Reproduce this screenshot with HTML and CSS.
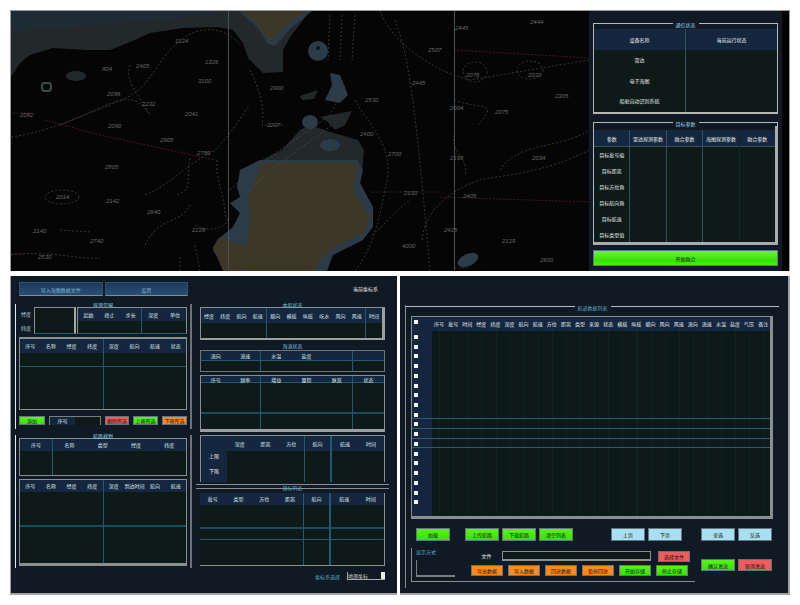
FILE: index.html
```html
<!DOCTYPE html>
<html lang="zh-CN">
<head>
  <meta charset="UTF-8" />
  <title>海图作业面板</title>
  <link rel="stylesheet" href="styles.css">
</head>
<body>
  <div class="top">
    <div class="map">
      <svg viewBox="11 11 578 260" width="578" height="260">
        <rect x="11" y="11" width="578" height="260" fill="#050505"/>
        <path class="mid" d="M11 11H310L290 37 283 50 283 72 263 73 248 58 243 43 233 30 217 27 183 28 150 33 130 42 110 50 87 50 53 48 30 55 20 63 11 77Z"/>
        <path class="deep" d="M11 11H228L200 16 130 22 60 28 11 32Z"/>
        <path class="shoal" d="M238 11H312L292 27 275 46 268 44 258 28 250 20Z"/>
        <path class="land" d="M242 11H308L287 23 270 42 263 32 255 20Z"/>
        <ellipse class="shoal" cx="318" cy="51" rx="10" ry="10"/>
        <circle cx="318" cy="48" r="2" fill="#10161c"/>
        <ellipse class="mid" cx="76" cy="76" rx="10" ry="5"/>
        <rect x="42" y="83" width="9" height="8" rx="3" fill="none" stroke="#3b5044" stroke-width="2"/>
        <path class="shoal" d="M330 73 340 75 348 95 340 103 325 100 332 85Z"/>
        <path class="mid" d="M300 96 318 90 314 99 302 100Z"/>
        <path class="mid" d="M320 117 352 111 345 125 335 130 328 122Z"/>
        <path class="mid" d="M250 170 262 160 282 150 300 130 310 125 330 132 358 140 364 150 362 172 340 172Z"/>
        <ellipse class="shoal" cx="310" cy="122" rx="8" ry="7"/>
        <ellipse class="shoal" cx="330" cy="145" rx="10" ry="6"/>
        <path class="shoal" d="M260 160 240 170 237 187 240 197 230 203 240 213 233 227 217 240 213 250 225 271H327L333 255 363 240 373 227 373 207 360 183 363 170 357 160Z"/>
        <path class="land" d="M260 163 353 163 358 170 353 190 370 217 363 233 333 248 320 260 315 271H223L213 247 220 237 247 247 250 217 248 197 257 177Z"/>
        <ellipse class="shoal" cx="468" cy="260" rx="11" ry="6" transform="rotate(-25 468 260)"/>
        <g class="contour">
          <path d="M11 137C60 130 90 110 120 100S150 70 175 45 230 30 240 45"/>
          <path d="M130 65C125 80 135 90 150 115"/>
          <path d="M60 125 110 105C130 95 140 100 150 115"/>
          <path d="M145 195C170 185 185 165 215 150 235 130 245 110 250 105"/>
          <path d="M190 158C185 180 195 190 175 195"/>
          <path d="M217 160C215 180 225 195 225 215 235 225 210 235 195 225"/>
          <ellipse cx="62" cy="197" rx="17" ry="7"/>
          <path d="M250 70C260 90 265 110 262 125L285 125"/>
          <path d="M230 190C260 160 290 145 330 115L345 85"/>
          <path d="M240 200C265 170 300 150 332 125"/>
          <path d="M330 15 328 60M342 15 340 60M355 15 352 60"/>
          <path d="M380 11C390 40 430 70 470 80L589 60"/>
          <path d="M355 100C365 120 390 140 388 175 380 215 375 245 355 271"/>
          <path d="M372 235C385 225 390 215 410 200"/>
          <ellipse cx="475" cy="72" rx="12" ry="10"/>
          <ellipse cx="530" cy="70" rx="13" ry="9"/>
          <path d="M454 100C480 110 500 100 478 125M454 135C450 150 470 160 465 175"/>
          <path d="M500 170C520 140 560 150 589 130"/>
          <path d="M422 240C425 210 450 190 480 180 500 175 540 175 589 150"/>
          <path d="M145 245C160 215 180 225 190 205M180 271V255M200 271 195 245"/>
          <path d="M11 255C50 250 80 260 100 258M60 230 90 232"/>
          <path d="M395 20C405 50 412 60 430 271"/>
        </g>
        <g class="redline">
          <path d="M45 120 100 135 160 148 215 160"/>
          <path d="M454 50 589 58M440 197 589 202M372 192H440"/>
          <path d="M13 113H32M13 254H24M228 268H241M455 268H468"/>
        </g>
        <g class="gridline">
          <path d="M228.500 11V271M454.500 11V271"/>
        </g>
        <g class="depth">
          <text x="175" y="43">1224</text><text x="205" y="64">1326</text><text x="198" y="83">3100</text>
          <text x="102" y="71">804</text><text x="136" y="68">2405</text><text x="142" y="106">2232</text>
          <text x="20" y="117">2082</text><text x="107" y="96">2096</text><text x="185" y="116">2041</text>
          <text x="108" y="128">2090</text><text x="160" y="142">2905</text><text x="197" y="155">2780</text>
          <text x="105" y="169">2805</text><text x="56" y="199">2014</text><text x="106" y="203">2142</text>
          <text x="192" y="232">2229</text><text x="90" y="243">2740</text><text x="33" y="233">2140</text>
          <text x="38" y="259">2530</text><text x="147" y="214">2640</text><text x="365" y="102">2530</text>
          <text x="360" y="136">2400</text><text x="388" y="156">2700</text><text x="455" y="30">2445</text>
          <text x="428" y="52">2507</text><text x="466" y="77">2076</text><text x="528" y="77">2033</text>
          <text x="412" y="85">2445</text><text x="450" y="110">2004</text><text x="495" y="114">2075</text>
          <text x="532" y="160">2034</text><text x="450" y="160">2195</text><text x="404" y="195">2133</text>
          <text x="463" y="198">2405</text><text x="444" y="232">2425</text><text x="502" y="243">2129</text>
          <text x="402" y="248">4000</text><text x="540" y="262">2600</text><text x="530" y="24">2444</text>
          <text x="555" y="98">2305</text><text x="270" y="90">2900</text><text x="267" y="127">2207</text>
        </g>
      </svg>
    </div>
    <div class="side">
      <div class="legend"><b>通信状态</b></div>
      <div class="box box-state">
        <div class="state-col">
          <div class="s-head">设备名称</div>
          <div class="s-row">雷达</div><div class="s-row">电子海图</div><div class="s-row">船舶自动识别系统</div>
        </div>
        <div class="state-col">
          <div class="s-head">当前运行状态</div>
          <div class="s-row"></div><div class="s-row"></div><div class="s-row"></div>
        </div>
      </div>
      <div class="legend legend-gap"><b>目标参数</b></div>
      <div class="box box-target">
        <div class="tg-grid">
          <div class="tg-col">
            <div class="s-head tg-head">参数</div>
            <div class="tg-row">目标批号编</div><div class="tg-row">目标距离</div><div class="tg-row">目标方位角</div>
            <div class="tg-row">目标航向角</div><div class="tg-row">目标航速</div><div class="tg-row">目标类型值</div>
          </div>
          <div class="tg-col"><div class="s-head tg-head">雷达探测参数</div></div>
          <div class="tg-col"><div class="s-head tg-head">融合参数</div></div>
          <div class="tg-col"><div class="s-head tg-head">海图探测参数</div></div>
          <div class="tg-col tg-last"><div class="s-head tg-head">融合参数</div></div>
        </div>
      </div>
      <button class="btn green go">开始融合</button>
    </div>
    <div class="strip"></div>
  </div>

  <div class="bottom">
    <div class="panel-left">
      <div class="col-a">
        <div class="tabs">
          <button class="tab">导入海图数据文件</button>
          <button class="tab">设置</button>
        </div>
        <div class="group">
          <div class="g-title">探测范围</div>
          <div class="pair">
            <div class="pair-label"><span>经度</span><span>纬度</span></div>
            <div class="tbl t-pick"><div class="blk"></div></div>
            <div class="tbl t-range">
              <div class="blk b-3"><div class="head h13"><span>起始</span><span>终止</span><span>步长</span></div></div>
              <div class="blk b-2"><div class="head h13"><span>深度</span><span>单位</span></div></div>
            </div>
          </div>
          <div class="tbl t-plan">
            <div class="blk"><div class="head h14"><span>序号</span><span>名称</span><span>经度</span><span>纬度</span></div><div class="rule r14"></div></div>
            <div class="blk"><div class="head h14"><span>深度</span><span>航向</span><span>航速</span><span>状态</span></div><div class="rule r14"></div></div>
          </div>
          <div class="ctrl">
            <button class="btn green c-first">添加</button>
            <div class="ctrl-input"><span>序号</span><i></i></div>
            <button class="btn red c-red">删除所选</button>
            <button class="btn green c-mid">上移所选</button>
            <button class="btn orange c-mid">下移所选</button>
          </div>
        </div>
        <div class="group g-second">
          <div class="g-title">航路规划</div>
          <div class="tbl t-route">
            <div class="blk b-first"><div class="head h12"><span>序号</span></div></div>
            <div class="blk"><div class="head h12"><span>名称</span><span>类型</span><span>经度</span><span>纬度</span></div></div>
          </div>
          <div class="tbl t-list">
            <div class="blk"><div class="head h12"><span>序号</span><span>名称</span><span>经度</span><span>纬度</span></div><div class="rule r35"></div></div>
            <div class="blk"><div class="head h12"><span>深度</span><span>到达时间</span><span>航向</span><span>航速</span></div><div class="rule r35"></div></div>
          </div>
        </div>
      </div>
      <div class="col-b">
        <div class="title">当前坐标系</div>
        <div class="s-title">本船状态</div>
        <div class="tbl t-ship">
          <div class="blk b-ship1"><div class="head h15"><span>经度</span><span>纬度</span><span>航向</span><span>航速</span></div></div>
          <div class="blk b-ship2"><div class="head h15"><span>艏向</span><span>横摇</span><span>纵摇</span><span>吃水</span><span>风向</span><span>风速</span></div></div>
          <div class="blk b-ship3"><div class="head h15"><span>时间</span></div></div>
        </div>
        <div class="s-title s-small">海流状态</div>
        <div class="tbl t-flow">
          <div class="blk b-f1"><div class="head h10"><span>流向</span><span>流速</span></div></div>
          <div class="blk b-f2"><div class="head h10"><span>水温</span><span>盐度</span><span></span></div></div>
          <div class="blk b-f3"><div class="head h10"></div></div>
        </div>
        <div class="tbl t-sonar">
          <div class="blk b-f1"><div class="head h7"><span>序号</span><span>频率</span></div><div class="rule r31"></div></div>
          <div class="blk b-f2"><div class="head h7"><span>增益</span><span>量程</span><span>脉宽</span></div><div class="rule r31"></div></div>
          <div class="blk b-f3"><div class="head h7"><span>状态</span></div><div class="rule r31"></div></div>
        </div>
        <div class="tbl t-env">
          <div class="env-side"><span>上限</span><span>下限</span></div>
          <div class="env-main">
            <div class="blk b-e1"><div class="head h15"><span>深度</span><span>距离</span><span>方位</span></div></div>
            <div class="blk b-e2"><div class="head h15"><span>航向</span></div></div>
            <div class="blk b-e3"><div class="head h15"><span>航速</span><span>时间</span></div></div>
          </div>
        </div>
        <div class="sep"><span>目标列表</span></div>
        <div class="tbl t-targets">
          <div class="blk b-e1 b-t0"><div class="head h12"><span>批号</span><span>类型</span><span>方位</span><span>距离</span></div><div class="rule r24"></div><div class="rule r10"></div></div>
          <div class="blk b-e2"><div class="head h12"><span>航向</span></div><div class="rule r24"></div><div class="rule r10"></div></div>
          <div class="blk b-e3"><div class="head h12"><span>航速</span><span>时间</span></div><div class="rule r24"></div><div class="rule r10"></div></div>
        </div>
        <div class="foot">
          <span class="foot-label">坐标系选择</span>
          <div class="select"><span>地理坐标</span><i></i></div>
        </div>
      </div>
    </div>

    <div class="panel-right">
      <div class="track">
        <div class="legend wide"><b>航迹数据列表</b></div>
        <div class="sheet">
          <div class="sheet-head">
            <span>选择</span><span>序号</span><span>批号</span><span>时间</span><span>经度</span><span>纬度</span><span>深度</span><span>航向</span><span>航速</span><span>方位</span><span>距离</span><span>类型</span><span>来源</span>
            <span>状态</span><span>横摇</span><span>纵摇</span><span>艏向</span><span>风向</span><span>风速</span><span>流向</span><span>流速</span><span>水温</span><span>盐度</span><span>气压</span><span>备注</span>
          </div>
          <div class="sheet-body">
            <div class="checks">
              <i></i><i></i><i></i><i></i><i></i><i></i><i></i><i></i><i></i><i></i>
              <i></i><i></i><i></i><i></i><i></i><i></i><i></i><i></i><i></i>
            </div>
            <div class="cells">
              <div class="line"></div><div class="line"></div><div class="line"></div><div class="line"></div>
            </div>
          </div>
        </div>
        <div class="actions">
          <button class="btn green act">加载</button>
          <button class="btn green act act-gap">上传航路</button>
          <button class="btn green act">下载航路</button>
          <button class="btn green act">清空列表</button>
          <button class="btn blue act act-b">上页</button>
          <button class="btn blue act">下页</button>
          <button class="btn blue act act-c">全选</button>
          <button class="btn blue act">反选</button>
        </div>
        <div class="lower-row">
          <div class="lower">
            <div class="bracket">
              <div class="bracket-title">显示方式</div>
              <div class="bracket-l"></div>
            </div>
            <div class="lower-main">
              <div class="lower-line">
                <span class="path-label">文件</span>
                <div class="path"></div>
                <button class="btn red small">选择文件</button>
              </div>
              <div class="lower-line spaced">
                <button class="btn orange small">导出数据</button>
                <button class="btn orange small">导入数据</button>
                <button class="btn orange small">回放数据</button>
                <button class="btn orange small">暂停回放</button>
                <button class="btn green small">开始存储</button>
                <button class="btn green small">停止存储</button>
              </div>
            </div>
          </div>
          <div class="end-btns">
            <button class="btn green act">确认发送</button>
            <button class="btn red act">取消发送</button>
          </div>
        </div>
      </div>
    </div>
  </div>
</body>
</html>
```
FILE: styles.css
```css
* { box-sizing: border-box; }
html, body { margin: 0; padding: 0; background: #fff; }
body {
  width: 800px;
  height: 605px;
  overflow: hidden;
  padding: 10px 10px 0;
  font-family: "Noto Sans CJK SC", "Liberation Sans", sans-serif;
  font-size: 5px;
  color: #e6ecec;
}
button { font-family: inherit; font-size: 5px; padding: 0; margin: 0; }

/* top: chart + side */
.top {
  display: flex;
  height: 261px;
  border: 1px solid #9a9a9a;
  border-bottom: 0;
}
.map { width: 578px; height: 260px; }
.map svg { display: block; }
.mid { fill: #23292a; }
.deep { fill: #1f2c35; }
.shoal { fill: #2b3b47; }
.land { fill: #3d3727; }
.contour path, .contour ellipse {
  fill: none;
  stroke: #4c4c4c;
  stroke-width: 0.7;
  stroke-dasharray: 2 2;
}
.redline path {
  fill: none;
  stroke: #5a2428;
  stroke-width: 0.7;
  stroke-dasharray: 2 1.500;
}
.gridline path { stroke: #4a5050; stroke-width: 1; }
.depth text {
  font-family: "Liberation Sans", sans-serif;
  font-style: italic;
  font-size: 6px;
  fill: #666;
}
.side {
  width: 193px;
  background: #111a24;
  padding: 11px 4px 0;
}
.strip { flex: 1; background: #030303; }

.legend {
  display: flex;
  height: 5px;
  line-height: 5px;
  color: #8ed6e8;
  text-align: center;
}
.legend b { font-weight: 400; padding: 0 3px; white-space: nowrap; }
.legend::before, .legend::after {
  content: "";
  flex: 1;
  height: 3px;
  align-self: flex-end;
  border-top: 1px solid #b4b8b8;
}
.legend::before { border-left: 1px solid #b4b8b8; }
.legend::after { border-right: 1px solid #b4b8b8; }
.legend-gap { margin-top: 7px; }

.box {
  border-left: 1px solid #b4b8b8;
  border-right: 1px solid #b4b8b8;
  border-bottom: 2px solid #b4b8b8;
}
.box-state {
  display: flex;
  height: 87px;
  padding-top: 2px;
}
.state-col { flex: 1; background: #0e1a18; }
.state-col + .state-col { border-left: 1px solid #36505c; }
.s-head {
  height: 21px;
  line-height: 21px;
  background: #15273f;
  text-align: center;
  color: #e8eeee;
}
.s-row { height: 20.500px; line-height: 20.500px; text-align: center; }

.box-target {
  height: 119px;
  padding-top: 4px;
  border-right: 3px solid #a8acac;
  border-bottom: 3px solid #a8acac;
}
.tg-grid { display: flex; height: 100%; background: #0e1a18; }
.tg-col { flex: 1; border-right: 1px solid #33505c; }
.tg-last { border-right: 0; }
.tg-col:nth-child(4) { border-right-color: #16262a; }
.tg-head { height: 17px; line-height: 17px; border-bottom: 1px solid #33505c; white-space: nowrap; }
.tg-row { height: 16px; line-height: 16px; text-align: center; white-space: nowrap; }

.btn {
  display: block;
  border: 1px solid #66737a;
  color: #0c140c;
  white-space: nowrap;
}
.green { background: linear-gradient(#5cf020, #36e208); }
.orange { background: #ff8a20; }
.red { background: #ee5c5e; }
.blue { background: #a6e0f2; }
.go { width: 100%; height: 16px; margin-top: 5px; background: linear-gradient(#6af52a, #36e00a 70%, #4cf016); }

/* bottom */
.bottom { display: flex; margin-top: 5px; }
.panel-left {
  display: flex;
  width: 387px;
  height: 319px;
  background: #101a24;
  border-left: 1px solid #9a9a9a;
  border-bottom: 2px solid #a4a4a4;
  padding-left: 4px;
}
.panel-right {
  width: 390px;
  height: 319px;
  margin-left: 3px;
  background: #101a24;
  border-right: 2px solid #a4a4a4;
  border-bottom: 2px solid #a4a4a4;
  padding: 29px 0 0 5px;
}
.track { height: 283px; border-left: 1px solid #8a8e8e; }

.col-a { width: 177px; padding-top: 6px; }
.tabs { display: flex; gap: 2px; margin: 0 4px; height: 14px; }
.tab {
  flex: 1;
  background: linear-gradient(#1c3a5a, #2a4e74);
  border: 1px solid #33506a;
  border-bottom-color: #7c8c98;
  color: #7fb4cc;
}
.group {
  margin-top: 8px;
  height: 125px;
  padding: 0 3px;
  border-left: 1px solid #e8e8e8;
  border-right: 2px solid #6e7274;
}
.g-second { margin-top: 6px; height: 133px; }
.g-title {
  height: 3px;
  line-height: 1px;
  text-align: center;
  color: #8ed6e8;
}

.tbl {
  display: flex;
  background: #0e1a18;
  border: 1px solid #8a8e8e;
  overflow: hidden;
}
.blk { flex: 1; min-width: 0; border-right: 1px solid #1d5a78; }
.blk:last-child { border-right: 0; }
.head { display: flex; background: #15273f; }
.head span { flex: 1; text-align: center; white-space: nowrap; color: #dfe8ea; }
.h7 { height: 7px; line-height: 7px; border-bottom: 1px solid #1d5a78; }
.h10 { height: 10px; line-height: 10px; border-bottom: 1px solid #1d5a78; }
.h12 { height: 12px; line-height: 12px; }
.h13 { height: 13px; line-height: 13px; }
.h14 { height: 14px; line-height: 14px; }
.h15 { height: 15px; line-height: 15px; }
.rule { border-bottom: 1px solid #1d5a78; }
.r10 { height: 11px; }
.r14 { height: 14px; }
.r24 { height: 24px; border-bottom-width: 2px; border-bottom-color: #1a4a60; }
.r31 { height: 31px; border-bottom-width: 2px; border-bottom-color: #1a4a60; }
.r35 { height: 35px; border-bottom-width: 2px; border-bottom-color: #1a4a60; }

.pair { display: flex; height: 27px; gap: 1px; }
.pair-label {
  width: 14px;
  display: flex;
  flex-direction: column;
  justify-content: space-around;
  text-align: center;
  color: #b8d4dc;
}
.t-pick { width: 42px; border-right: 2px solid #a4a8a8; border-bottom-color: #1d5a78; }
.t-range { flex: 1; border-bottom-color: #1d5a78; }
.b-3 { flex: 65; }
.b-2 { flex: 45; }
.t-plan { height: 73px; margin-top: 3px; border-width: 2px 1px 1px; }
.ctrl { display: flex; height: 9px; margin-top: 6px; }
.ctrl .btn { height: 9px; line-height: 7px; }
.c-first { width: 26px; }
.ctrl-input {
  display: flex;
  width: 52px;
  margin: 0 4px;
  border: 1px solid #7a7e80;
  border-bottom: 0;
  background: #0e1a18;
  line-height: 8px;
}
.ctrl-input span { width: 25px; background: #15273f; text-align: center; }
.c-red { width: 24px; }
.c-mid { width: 25px; margin-left: 4px; }
.t-route { height: 38px; }
.b-first { flex: none; width: 33px; }
.t-list { height: 87px; margin-top: 3px; border-bottom: 3px solid #8a8e8e; }

.col-b { width: 185px; margin-left: 8px; }
.title { height: 6px; line-height: 6px; margin-top: 10px; padding-right: 7px; text-align: right; color: #f0f0f0; }
.s-title { height: 5px; line-height: 5px; margin-top: 10px; text-align: center; color: #7cc0dc; }
.s-small { height: 8px; line-height: 7px; margin-top: 2px; }
.t-ship { height: 33px; border-bottom: 2px solid #9c9f9f; border-right: 3px solid #9c9f9f; }
.b-ship1 { flex: none; width: 66px; }
.b-ship2 { flex: none; width: 99px; }
.t-flow { height: 22px; border-color: #6e7274; }
.b-f1 { flex: none; width: 60px; }
.b-f2 { flex: none; width: 92px; }
.t-sonar { height: 57px; margin-top: 3px; border-bottom: 3px solid #9c9f9f; }
.t-env { height: 47px; margin-top: 3px; border-bottom: 0; }
.env-side {
  display: flex;
  flex-direction: column;
  justify-content: flex-end;
  width: 26px;
  padding: 0 0 4px;
  background: #15273f;
  text-align: center;
}
.env-side span { height: 15px; line-height: 15px; }
.env-main { flex: 1; display: flex; }
.b-e1 { flex: none; width: 78px; }
.b-e2 { flex: none; width: 27px; border-right-width: 2px; }
.b-t0 { width: 104px; }
.sep {
  height: 5px;
  margin: 2px -4px 4px;
  border-top: 1px solid #8a8e8e;
  border-bottom: 1px solid #8a8e8e;
  line-height: 6px;
  text-align: center;
  color: #5fa8c8;
}
.t-targets { height: 73px; border-top: 0; border-left: 0; }
.foot { display: flex; justify-content: flex-end; align-items: center; height: 8px; margin-top: 6px; }
.foot-label { color: #52b0c8; margin-right: 7px; }
.select {
  display: flex;
  justify-content: space-between;
  width: 38px;
  height: 8px;
  line-height: 7px;
  border-left: 1px solid #a4a8a8;
  border-bottom: 1px solid #a4a8a8;
  color: #d0c8c0;
}
.select i { width: 4px; background: #e8ecec; }

/* right panel */
.wide { width: 373px; color: #5fa8c8; }
.wide::before { border-left: 0; }
.wide::after { border-right: 0; }
.sheet {
  width: 362px;
  height: 203px;
  margin: 6px 0 0 5px;
  background: #0e1a18;
  border: 1px solid #8a8e8e;
  border-width: 1px 3px 3px 1px;
}
.sheet-head { display: flex; height: 14px; line-height: 14px; background: #15273f; }
.sheet-head span { flex: none; width: 14.100px; text-align: center; white-space: nowrap; }
.sheet-head span:first-child { width: 20px; }
.sheet-body {
  display: flex;
  height: 185px;
  background: repeating-linear-gradient(90deg, #0e1a18 0 13px, #12211f 13px 14.100px);
}
.checks { width: 20px; background: #15273f; margin-top: -14px; padding: 3px 0 0 2px; }
.checks i { display: block; width: 4px; height: 4px; margin-bottom: 5.730px; background: #f4f6f6; }
.checks i:first-child { margin-bottom: 11px; }
.cells { flex: 1; margin-left: -20px; padding-top: 87px; }
.line { height: 9.750px; border-top: 1px solid #2f5c68; }
.actions { display: flex; margin: 9px 0 0 10px; }
.act { width: 34px; height: 13px; }
.actions .act { margin-left: 3px; }
.actions .act:first-child { margin-left: 0; }
.actions .act-gap { margin-left: 15px; }
.actions .act-b { margin-left: 38px; }
.actions .act-c { margin-left: 19px; }
.lower-row { display: flex; margin: 7px 0 0 5px; }
.lower {
  display: flex;
  width: 284px;
  height: 34px;
  padding-left: 4px;
  border-left: 1px solid #8a8e8e;
  border-bottom: 1px solid #8a8e8e;
}
.bracket { width: 39px; }
.bracket-title { height: 8px; line-height: 8px; color: #5fa8c8; }
.bracket-l {
  height: 17px;
  margin-top: 4px;
  border-left: 1px solid #7a7e80;
  border-bottom: 2px solid #7a7e80;
}
.lower-main { margin-left: 16px; padding-top: 3px; }
.lower-line { display: flex; height: 11px; }
.spaced { margin-top: 3px; gap: 5px; }
.path-label { width: 31px; line-height: 10px; text-align: center; }
.path {
  width: 149px;
  height: 10px;
  background: #0e1a18;
  border: 1px solid #8a8e8e;
  border-bottom-width: 2px;
}
.small { width: 32px; height: 11px; }
.lower-line .red { margin-left: 7px; }
.end-btns { display: flex; gap: 3px; margin: 11px 0 0 6px; }
.end-btns .act { height: 12px; }
```
